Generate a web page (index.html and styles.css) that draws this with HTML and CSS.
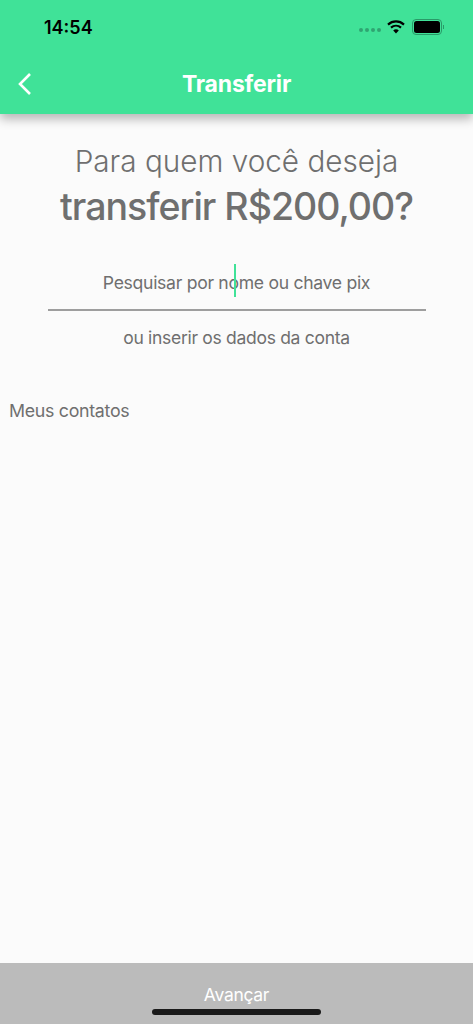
FILE: index.html
```html
<!DOCTYPE html>
<html lang="pt-BR">
<head>
    <meta charset="UTF-8">
    <title>Transferir</title>
    <link rel="stylesheet" href="styles.css">
</head>
<body>
    <header class="top-bar">
        <div class="status-bar">
            <span class="status-time">14:54</span>
            <div class="status-icons">
                <div class="signal-dots"><i></i><i></i><i></i><i></i></div>
                <svg class="wifi-icon" width="18" height="14" viewBox="0 0 18 14">
                    <path d="M1 4.6 C5.6 0.4 12.4 0.4 17 4.6" fill="none" stroke="#000" stroke-width="2.2"/>
                    <path d="M4 7.6 C6.9 5.1 11.1 5.1 14 7.6" fill="none" stroke="#000" stroke-width="2.2"/>
                    <path d="M6.2 10.4 C7.8 9 10.2 9 11.8 10.4 L9 13.4 Z" fill="#000"/>
                </svg>
                <div class="battery"><div class="battery-fill"></div></div>
                <div class="battery-cap"></div>
            </div>
        </div>
        <div class="nav-bar">
            <svg class="back-icon" width="16" height="24" viewBox="0 0 16 24">
                <path d="M13 2 L3 12 L13 22" fill="none" stroke="#fff" stroke-width="2.6"/>
            </svg>
            <h1 class="nav-title">Transferir</h1>
        </div>
    </header>

    <main class="content">
        <h2 class="question">
            <span class="question-light">Para quem você deseja</span>
            <span class="question-bold">transferir R$200,00?</span>
        </h2>
        <div class="search-field">
            <span class="search-text">Pesquisar por nome ou chave pix</span>
            <span class="caret"></span>
        </div>
        <p class="account-link">ou inserir os dados da conta</p>
        <h3 class="contacts-title">Meus contatos</h3>
    </main>

    <footer class="next-bar">
        <span class="next-label">Avançar</span>
        <div class="home-indicator"></div>
    </footer>
</body>
</html>
```

FILE: styles.css
```css
html, body {
    height: 100%;
}

body {
    margin: 0;
    width: 473px;
    height: 1024px;
    overflow: hidden;
    display: flex;
    flex-direction: column;
    background: #fbfbfb;
    font-family: 'Inter', sans-serif;
    color: #6f6f6f;
}

.top-bar {
    height: 114px;
    flex-shrink: 0;
    background: #40e298;
    box-shadow: 0 5px 10px rgba(0, 0, 0, 0.28);
    position: relative;
    z-index: 1;
}

.status-bar {
    height: 54px;
    display: flex;
    justify-content: space-between;
    align-items: center;
    padding: 0 29px 0 44px;
}

.status-time {
    font-size: 18px;
    font-weight: 600;
    color: #000;
}

.status-icons {
    display: flex;
    align-items: center;
}

.signal-dots {
    display: flex;
    gap: 2px;
    margin: 5px 6px 0 0;
}

.signal-dots i {
    width: 4px;
    height: 4px;
    border-radius: 50%;
    background: #2fa472;
}

.wifi-icon {
    margin-right: 7px;
}

.battery {
    width: 26px;
    height: 12px;
    padding: 1px;
    border: 1px solid #2a9a68;
    border-radius: 4px;
    display: flex;
}

.battery-fill {
    flex: 1;
    background: #000;
    border-radius: 2.5px;
}

.battery-cap {
    width: 1px;
    height: 4px;
    margin-left: 1px;
    background: #2a9a68;
}

.nav-bar {
    height: 60px;
    display: flex;
    justify-content: center;
    align-items: center;
    position: relative;
}

.back-icon {
    position: absolute;
    left: 17px;
    top: 18px;
}

.nav-title {
    margin: 0 0 1px;
    font-size: 23px;
    font-weight: 700;
    letter-spacing: -0.2px;
    color: #fff;
}

.content {
    flex: 1;
    display: flex;
    flex-direction: column;
    align-items: center;
}

.question {
    margin: 26px 0 0;
    display: flex;
    flex-direction: column;
    align-items: center;
    font-weight: 400;
}

.question-light {
    font-size: 29.7px;
    font-weight: 300;
    line-height: 42px;
}

.question-bold {
    font-size: 37.5px;
    font-weight: 500;
    line-height: 50px;
    letter-spacing: -1px;
}

.search-field {
    width: 378px;
    height: 49px;
    margin-top: 30px;
    box-sizing: border-box;
    border-bottom: 2px solid #9e9e9e;
    display: flex;
    justify-content: center;
    align-items: center;
    position: relative;
}

.search-text {
    font-size: 17.6px;
    letter-spacing: -0.3px;
    margin-bottom: 7px;
}

.caret {
    position: absolute;
    left: 186px;
    top: 2px;
    width: 2px;
    height: 33px;
    background: #40e298;
}

.account-link {
    margin: 15px 0 0;
    font-size: 17.5px;
    letter-spacing: -0.3px;
    line-height: 24px;
}

.contacts-title {
    align-self: flex-start;
    margin: 49px 0 0 9px;
    font-size: 17.8px;
    font-weight: 400;
    letter-spacing: -0.3px;
    line-height: 24px;
}

.next-bar {
    height: 61px;
    flex-shrink: 0;
    background: #bbbbbb;
    display: flex;
    justify-content: center;
    position: relative;
}

.next-label {
    margin-top: 20px;
    font-size: 17.5px;
    letter-spacing: -0.3px;
    line-height: 24px;
    color: #fff;
}

.home-indicator {
    position: absolute;
    left: 152px;
    bottom: 9px;
    width: 169px;
    height: 6px;
    border-radius: 3px;
    background: #1a1a1a;
}
```
